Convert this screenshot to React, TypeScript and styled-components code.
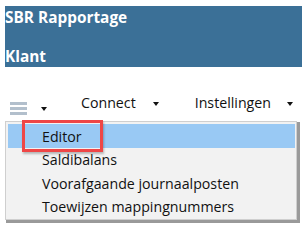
import React from "react";
import styled, { createGlobalStyle } from "styled-components";

const Global = createGlobalStyle`
  html, body { margin: 0; padding: 0; background: #ffffff; }
  body { font-family: "Open Sans", "Noto Sans", sans-serif; }
`;

const Page = styled.div`
  position: relative;
  width: 303px;
  height: 229px;
  padding: 6px 1px 0 5px;
  box-sizing: border-box;
  overflow: hidden;
`;

const Header = styled.div`
  background: #3b7097;
  height: 61px;
  display: flex;
  flex-direction: column;
  justify-content: space-between;
  padding: 1px 0 0 0;
  box-sizing: border-box;
`;

const HeaderLine = styled.div`
  color: #ffffff;
  font-weight: 700;
  font-size: 15.4px;
  line-height: 21px;
`;

const Toolbar = styled.div`
  display: flex;
  align-items: center;
  height: 22px;
  margin-top: 25px;
`;

const Burger = styled.div`
  display: flex;
  flex-direction: column;
  gap: 2px;
  margin-left: 5px;
  margin-top: 10px;
  width: 17px;
`;

const Bar = styled.span`
  display: block;
  height: 3px;
  background: #b2bfcc;
`;

const Caret = styled.span<{ $ml: number; $mt: number }>`
  margin-left: ${(p) => p.$ml}px;
  margin-top: ${(p) => p.$mt}px;
  width: 0;
  height: 0;
  border-left: 3.5px solid transparent;
  border-right: 3.5px solid transparent;
  border-top: 4px solid #111;
`;

const ToolLabel = styled.span<{ $ml: number }>`
  margin-left: ${(p) => p.$ml}px;
  font-size: 14.2px;
  color: #111;
  line-height: 20px;
`;

const Menu = styled.div`
  position: absolute;
  left: 5px;
  top: 121px;
  width: 292px;
  background: #f2f2f2;
  border: 1px solid #cfcfcf;
  box-shadow: 2px 2px 0 1px #9a9a9a;
  padding: 2px 1px 1px 2px;
  box-sizing: border-box;
  display: flex;
  flex-direction: column;
`;

const Item = styled.div<{ $active?: boolean }>`
  height: 23.5px;
  display: flex;
  align-items: center;
  padding-left: 34px;
  padding-top: 1px;
  box-sizing: border-box;
  font-size: 14.2px;
  color: #111;
  background: ${(p) => (p.$active ? "#99c9f4" : "transparent")};
  position: relative;
`;

const Highlight = styled.span`
  position: absolute;
  left: 14px;
  top: -4px;
  width: 81px;
  height: 32px;
  border: 3px solid #ef4646;
  box-sizing: border-box;
  box-shadow: 1px 2px 2px rgba(0, 0, 0, 0.25);
`;

export default function App() {
  return (
    <>
      <Global />
      <Page>
        <Header>
          <HeaderLine>SBR Rapportage</HeaderLine>
          <HeaderLine>Klant</HeaderLine>
        </Header>
        <Toolbar>
          <Burger>
            <Bar />
            <Bar />
            <Bar />
          </Burger>
          <Caret $ml={14} $mt={11} />
          <ToolLabel $ml={34}>Connect</ToolLabel>
          <Caret $ml={17} $mt={1} />
          <ToolLabel $ml={36}>Instellingen</ToolLabel>
          <Caret $ml={16} $mt={1} />
        </Toolbar>
        <Menu>
          <Item $active>
            <Highlight />
            Editor
          </Item>
          <Item>Saldibalans</Item>
          <Item>Voorafgaande journaalposten</Item>
          <Item>Toewijzen mappingnummers</Item>
        </Menu>
      </Page>
    </>
  );
}
